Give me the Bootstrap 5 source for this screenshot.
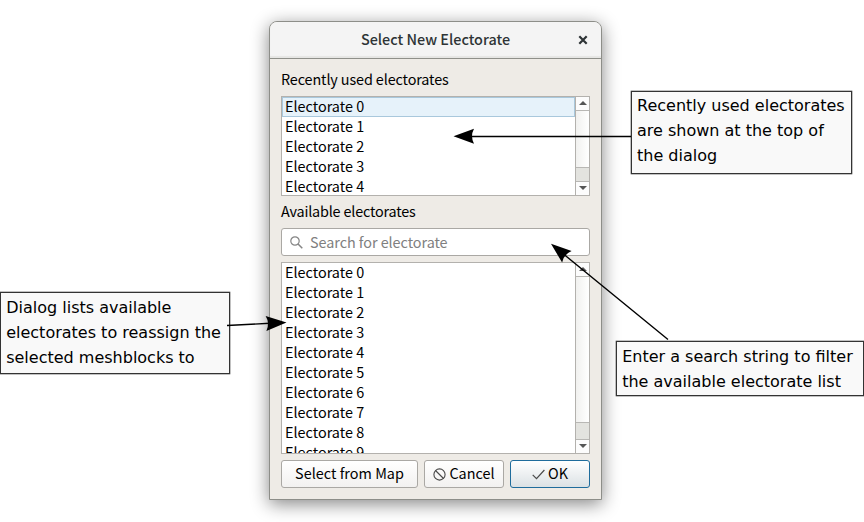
<!DOCTYPE html>
<html lang="en">
<head>
<meta charset="utf-8">
<title>Select New Electorate</title>
<link href="https://cdn.jsdelivr.net/npm/bootstrap@5.3.0/dist/css/bootstrap.min.css" rel="stylesheet">
<style>
body{width:864px;height:522px;background:#fff;color:#000;overflow:hidden}
.stage{display:flow-root}
.dialog-win{width:333px;height:479px;margin:21px 0 0 269px;border:1px solid #8d8e89;border-radius:8px 8px 0 0;background:#eeebe6;box-shadow:0 4px 18px 0 rgba(0,0,0,.48);font:14.4px/20px "Noto Sans CJK SC","Noto Sans",sans-serif;color:#000}
.titlebar{height:37px;background:#f4f4f4;border-bottom:1px solid #8f908a;border-radius:7px 7px 0 0;box-shadow:inset 0 -2px 1px #e6e6e4;color:#2e3436;font-weight:500;line-height:33px}
.close-btn{right:13px;top:13px;line-height:0}
.dialog-content{padding:10px 11px 0}
.t-label{letter-spacing:-.12px}
.t-search{letter-spacing:-.05px;margin-left:7px}
.listbox{border:1px solid #b3b1ad;background:#fff;overflow:hidden}
.recent{height:100px;margin-top:7px}
.available{height:192px;margin-top:6px}
.entry{height:20px;padding-left:3px;line-height:18px;white-space:nowrap}
.entry.chosen{background:#e6f2fa;box-shadow:inset 0 0 0 1px #a9c8dc}
.scroller{width:14px;border-left:1px solid #b3b1ad;background:#e3e3df;flex:none}
.arrow-cell{height:14px;background:#fcfcfc;flex:none;padding-bottom:2px}
.arrow-cell.up{border-bottom:1px solid #b8b7b4}
.arrow-cell.down{border-top:1px solid #b8b7b4}
.handle{background:linear-gradient(90deg,#f1f1ef,#fff);border-bottom:1px solid #b8b7b4;flex:none}
.recent .handle{height:57px}
.available .handle{height:146px}
.searchbox{height:28px;margin-top:7px;border:1px solid #aaa8a4;border-radius:3px;background:#fff;color:#808080;padding-left:8px}
.push{height:28px;border:1px solid #aaa8a4;border-radius:3px;background:linear-gradient(#fff,#f2f1f0);letter-spacing:.02px;gap:3px;line-height:18px}
.push span{padding-bottom:2px}
.push.primary-act{border-color:#1f6c9c;background:linear-gradient(#fff,#dbe1e4)}
.actions{margin-top:6px;gap:6px}
.b-map{width:137px}
.b-side{width:80px}
.avail-label{margin-top:5px;letter-spacing:-.18px}
.note{position:absolute;border:1px solid #333;background:#f9f9f9;color:#000;font:16px/25px "DejaVu Sans",sans-serif;padding:2px 5.2px;white-space:nowrap;box-shadow:0 0 0 .3px #333}
.n-recent{left:631px;top:91px;width:221px;height:83px;padding-top:1px;padding-left:5px}
.n-list{left:0;top:292px;width:230px;height:82px}
.n-search{left:616px;top:341px;width:248px;height:55px;padding-top:1.5px}
.pointers{position:absolute;left:0;top:0}
</style>
</head>
<body>
<main class="stage overflow-hidden position-relative h-100">
<section class="dialog-win">
  <header class="titlebar position-relative text-center"><span>Select New Electorate</span>
    <span class="close-btn position-absolute"><svg width="10" height="10" viewBox="0 0 10 10"><path d="M1.300 1.300l7.400 7.400M8.700 1.300l-7.400 7.400" stroke="#2e3436" stroke-width="2.200"/></svg></span>
  </header>
  <div class="dialog-content d-flex flex-column">
    <div class="t-label">Recently used electorates</div>
    <div class="listbox recent d-flex">
      <div class="flex-grow-1">
        <div class="entry chosen">Electorate 0</div><div class="entry">Electorate 1</div><div class="entry">Electorate 2</div><div class="entry">Electorate 3</div><div class="entry">Electorate 4</div>
      </div>
      <div class="scroller d-flex flex-column">
        <div class="arrow-cell up d-flex align-items-center justify-content-center"><svg width="8" height="4"><path d="M0 4L4 0l4 4z" fill="#555"/></svg></div>
        <div class="handle"></div>
        <div class="arrow-cell down mt-auto d-flex align-items-center justify-content-center"><svg width="8" height="4"><path d="M0 0L4 4l4-4z" fill="#555"/></svg></div>
      </div>
    </div>
    <div class="t-label avail-label">Available electorates</div>
    <div class="searchbox d-flex align-items-center">
      <svg width="13" height="13" viewBox="0 0 13 13" fill="none" stroke="#858585" stroke-width="1.2"><circle cx="5" cy="5" r="4.2"/><path d="M8 8l4.3 4.3" stroke-width="1.5"/></svg>
      <span class="t-search">Search for electorate</span>
    </div>
    <div class="listbox available d-flex">
      <div class="flex-grow-1">
        <div class="entry">Electorate 0</div><div class="entry">Electorate 1</div><div class="entry">Electorate 2</div><div class="entry">Electorate 3</div><div class="entry">Electorate 4</div><div class="entry">Electorate 5</div><div class="entry">Electorate 6</div><div class="entry">Electorate 7</div><div class="entry">Electorate 8</div><div class="entry">Electorate 9</div>
      </div>
      <div class="scroller d-flex flex-column">
        <div class="arrow-cell up d-flex align-items-center justify-content-center"><svg width="8" height="4"><path d="M0 4L4 0l4 4z" fill="#555"/></svg></div>
        <div class="handle"></div>
        <div class="arrow-cell down mt-auto d-flex align-items-center justify-content-center"><svg width="8" height="4"><path d="M0 0L4 4l4-4z" fill="#555"/></svg></div>
      </div>
    </div>
    <div class="d-flex actions">
      <div class="push b-map d-flex align-items-center justify-content-center"><span>Select from Map</span></div>
      <div class="push b-side d-flex align-items-center justify-content-center"><svg width="13" height="13" viewBox="0 0 13 13" fill="none" stroke="#4a4a4a" stroke-width="1.1"><circle cx="6.5" cy="6.5" r="5.6"/><path d="M2.5 2.5l8 8"/></svg><span>Cancel</span></div>
      <div class="push b-side primary-act d-flex align-items-center justify-content-center"><svg width="13" height="11" viewBox="0 0 13 11" fill="none" stroke="#4a4a4a" stroke-width="1.2"><path d="M.7 5.8l3.8 3.8L12.4 1"/></svg><span>OK</span></div>
    </div>
  </div>
</section>
<aside class="note n-recent">Recently used electorates<br>are shown at the top of<br>the dialog</aside>
<aside class="note n-list">Dialog lists available<br>electorates to reassign the<br>selected meshblocks to</aside>
<aside class="note n-search">Enter a search string to filter<br>the available electorate list</aside>
<svg class="pointers" width="864" height="522" viewBox="0 0 864 522" stroke="#000" stroke-width="1.4">
  <defs><path id="tip" d="M0 0L20.5-7.5Q16.5 0 20.5 7.5z" stroke="none"/></defs>
  <path d="M631 136.500H468M668 339.500L564 254.500M227 325.500L270 323.300" fill="none"/>
  <use href="#tip" transform="translate(453.500 136.300)"/>
  <use href="#tip" transform="translate(551 243.800) rotate(39.300)"/>
  <use href="#tip" transform="translate(286.500 322.500) rotate(177.200)"/>
</svg>
</main>
<script src="https://cdn.jsdelivr.net/npm/bootstrap@5.3.0/dist/js/bootstrap.bundle.min.js"></script>
</body>
</html>
